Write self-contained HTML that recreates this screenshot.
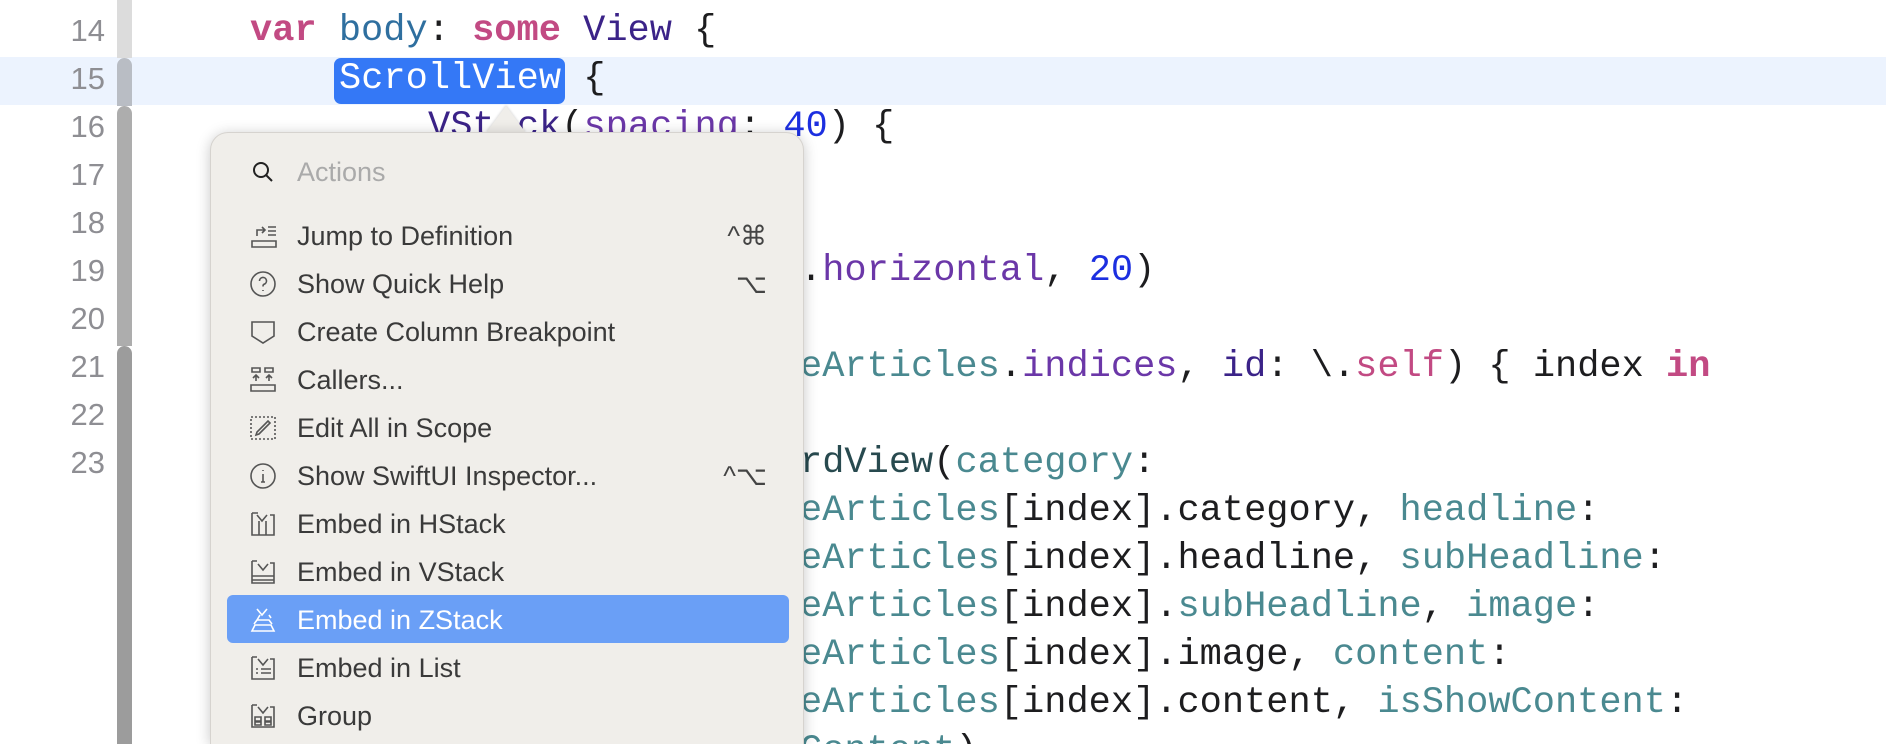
<!DOCTYPE html>
<html style="width:1886px;height:744px;overflow:hidden"><head><meta charset="utf-8"><style>
*{margin:0;padding:0;box-sizing:border-box}
body{width:1886px;height:744px;overflow:hidden;background:#fff;position:relative;font-family:"Liberation Mono",monospace}
.hl{position:absolute;left:0;top:57px;width:1886px;height:48px;background:#ecf3fe}
.ln{position:absolute;left:0;width:105px;text-align:right;font-family:"Liberation Sans",sans-serif;font-size:31px;color:#8e8e93;height:48px;line-height:48px}
.bar{position:absolute;left:117px;width:15px}
.code{position:absolute;font-size:37px;height:48px;line-height:48px;white-space:pre;color:#1d1d1f;letter-spacing:0}
.pk{color:#c24a83;font-weight:bold}.bl{color:#2f6f9f}.nv{color:#3b2388}.pu{color:#6b37a8}.nm{color:#1c2fe0}.tl{color:#4a8990}.dk{color:#284a4f}.kw{color:#c24a83}
.sel{position:absolute;left:334px;top:58px;width:231px;height:46px;background:#3478f6;border-radius:7px}
.pop{position:absolute;left:210px;top:132px;width:594px;height:612px;background:#f0eeea;border-radius:18px 18px 0 0;box-shadow:0 2px 14px rgba(0,0,0,.22);border:1px solid #d6d3cf;border-bottom:none}
.arrow{position:absolute;left:486px;top:106px;width:0;height:0;border-left:20px solid transparent;border-right:20px solid transparent;border-bottom:27px solid #f0eeea;filter:drop-shadow(0 -1px 1px rgba(0,0,0,.15))}
.it{position:absolute;left:0;width:594px;height:48px;font-family:"Liberation Sans",sans-serif;font-size:27px;color:#3a3a3a;line-height:48px}
.it .t{position:absolute;left:86px}
.it .k{position:absolute;right:38px;color:#444}
.it svg{position:absolute;left:38px;top:10px}
.hi{position:absolute;left:16px;top:462px;width:562px;height:48px;background:#6a9ff6;border-radius:6px}
</style></head><body>
<div class="hl"></div>
<div class="ln" style="top:7px">14</div>
<div class="ln" style="top:55px">15</div>
<div class="ln" style="top:103px">16</div>
<div class="ln" style="top:151px">17</div>
<div class="ln" style="top:199px">18</div>
<div class="ln" style="top:247px">19</div>
<div class="ln" style="top:295px">20</div>
<div class="ln" style="top:343px">21</div>
<div class="ln" style="top:391px">22</div>
<div class="ln" style="top:439px">23</div>
<div class="bar" style="top:0;height:58px;background:#dcdcdc"></div>
<div class="bar" style="top:58px;height:48px;background:#b9bdc4;border-radius:8px 8px 0 0"></div>
<div class="bar" style="top:106px;height:240px;background:#adadad;border-radius:8px 8px 0 0"></div>
<div class="bar" style="top:346px;height:398px;background:#9c9c9c;border-radius:8px 8px 0 0"></div>
<div class="sel"></div>
<div class="code" style="left:250px;top:7px"><span class="pk">var</span> <span class="bl">body</span>: <span class="pk">some</span> <span class="nv">View</span> {</div>
<div class="code" style="left:339px;top:55px"><span style="color:#fff">ScrollView</span> {</div>
<div class="code" style="left:428px;top:103px"><span class="nv">VStack</span>(<span class="pu">spacing</span>: <span class="nm">40</span>) {</div>
<div class="code" style="left:800px;top:247px">.<span class="pu">horizontal</span>, <span class="nm">20</span>)</div>
<div class="code" style="left:800px;top:343px"><span class="tl">eArticles</span>.<span class="pu">indices</span>, <span class="nv">id</span>: \.<span class="kw">self</span>) { index <span class="pk">in</span></div>
<div class="code" style="left:800px;top:439px"><span class="dk">rdView</span>(<span class="tl">category</span>:</div>
<div class="code" style="left:800px;top:487px"><span class="tl">eArticles</span>[index].category, <span class="tl">headline</span>:</div>
<div class="code" style="left:800px;top:535px"><span class="tl">eArticles</span>[index].headline, <span class="tl">subHeadline</span>:</div>
<div class="code" style="left:800px;top:583px"><span class="tl">eArticles</span>[index].<span class="tl">subHeadline</span>, <span class="tl">image</span>:</div>
<div class="code" style="left:800px;top:631px"><span class="tl">eArticles</span>[index].image, <span class="tl">content</span>:</div>
<div class="code" style="left:800px;top:679px"><span class="tl">eArticles</span>[index].content, <span class="tl">isShowContent</span>:</div>
<div class="code" style="left:800px;top:727px;height:17px;overflow:hidden"><span class="tl">Content</span>)</div>
<div class="arrow"></div>
<div class="pop">
<div class="it" style="top:15px"><svg width="28" height="28" viewBox="0 0 28 28" fill="none" stroke="#222" stroke-width="2"><circle cx="12" cy="12" r="7"/><path d="M17 17l6 6"/></svg><span class="t" style="color:#aaa">Actions</span></div>
<div class="hi"></div>
<div class="it" style="top:79px"><svg width="30" height="28" viewBox="0 0 30 28" fill="none" stroke="#555" stroke-width="1.6"><path d="M3 19h24v6H3zM8 14V8h8M13 5l3 3-3 3M19 5h8M19 9h8M19 13h8"/></svg><span class="t">Jump to Definition</span><span class="k">^⌘</span></div>
<div class="it" style="top:127px"><svg width="28" height="28" viewBox="0 0 28 28" fill="none" stroke="#555" stroke-width="1.6"><circle cx="14" cy="14" r="12"/><path d="M10.5 11a3.5 3.5 0 1 1 4.5 3.3c-1 .4-1 1-1 2.2M14 20v1"/></svg><span class="t">Show Quick Help</span><span class="k">⌥</span></div>
<div class="it" style="top:175px"><svg width="28" height="28" viewBox="0 0 28 28" fill="none" stroke="#555" stroke-width="1.6"><path d="M3 4h22v14l-11 7-11-7z"/></svg><span class="t">Create Column Breakpoint</span></div>
<div class="it" style="top:223px"><svg width="28" height="28" viewBox="0 0 28 28" fill="none" stroke="#555" stroke-width="1.6"><path d="M3 2h8v4H3zM16 2h8v4h-8zM7 15V9M4 12l3-3 3 3M20 15V9M17 12l3-3 3 3M2 19h24v6H2z"/></svg><span class="t">Callers...</span></div>
<div class="it" style="top:271px"><svg width="28" height="28" viewBox="0 0 28 28" fill="none" stroke="#555" stroke-width="1.6"><rect x="2" y="3" width="24" height="22" stroke-dasharray="2 2"/><path d="M7 21l3-1 11-11-2-2L8 18z"/></svg><span class="t">Edit All in Scope</span></div>
<div class="it" style="top:319px"><svg width="28" height="28" viewBox="0 0 28 28" fill="none" stroke="#555" stroke-width="1.6"><circle cx="14" cy="14" r="12"/><path d="M14 12v8M12 20h4M14 8v1"/></svg><span class="t">Show SwiftUI Inspector...</span><span class="k">^⌥</span></div>
<div class="it" style="top:367px"><svg width="28" height="28" viewBox="0 0 28 28" fill="none" stroke="#555" stroke-width="1.6"><path d="M3 3h6M3 3v22h22V5h-4M10 25V11M17 25V11M8 5l5 6 5-6"/></svg><span class="t">Embed in HStack</span></div>
<div class="it" style="top:415px"><svg width="28" height="28" viewBox="0 0 28 28" fill="none" stroke="#555" stroke-width="1.6"><path d="M3 3h5M3 3v22h22V5h-4M3 18h22M3 22h22M9 6l5 6 5-6"/></svg><span class="t">Embed in VStack</span></div>
<div class="it" style="top:463px;color:#fff"><svg width="28" height="28" viewBox="0 0 28 28" fill="none" stroke="#fff" stroke-width="1.6"><path d="M3 25h22l-3-6H6zM5 18l3-4h12l3 4M8 14l3-5M8 3l5 6 5-6M20 9l2 3"/></svg><span class="t">Embed in ZStack</span></div>
<div class="it" style="top:511px"><svg width="28" height="28" viewBox="0 0 28 28" fill="none" stroke="#555" stroke-width="1.6"><path d="M3 3h5M3 3v22h22V5h-4M7 15h2M12 15h10M7 19h2M12 19h10M9 5l5 6 5-6"/></svg><span class="t">Embed in List</span></div>
<div class="it" style="top:559px"><svg width="28" height="28" viewBox="0 0 28 28" fill="none" stroke="#555" stroke-width="1.6"><path d="M3 3h5M3 3v22h22V5h-4M6 15h6v4H6zM16 15h6v4h-6zM6 20h6v3H6zM16 20h6v3h-6zM9 5l5 6 5-6"/></svg><span class="t">Group</span></div>
</div>
</body></html>
